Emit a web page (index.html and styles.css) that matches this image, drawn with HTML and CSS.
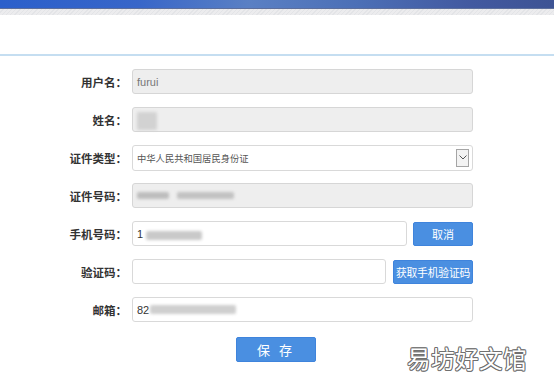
FILE: index.html
```html
<!DOCTYPE html>
<html lang="zh-CN">
<head>
<meta charset="utf-8">
<title>个人信息</title>
<link rel="stylesheet" href="styles.css">
</head>
<body>
<div class="header">
  <div class="bluebar"></div>
  <div class="hatch"></div>
</div>
<div class="titlebar"></div>
<form class="form">
  <div class="row">
    <label class="lbl">用户名：</label>
    <div class="field disabled"><span class="val">furui</span></div>
  </div>
  <div class="row">
    <label class="lbl">姓名：</label>
    <div class="field disabled"><span class="blur blur-name"></span></div>
  </div>
  <div class="row">
    <label class="lbl">证件类型：</label>
    <div class="field select"><span class="val small">中华人民共和国居民身份证</span><span class="arrow"><svg width="8" height="5" viewBox="0 0 8 5"><path d="M0.5 0.5 L4 4 L7.5 0.5" fill="none" stroke="#555" stroke-width="1"/></svg></span></div>
  </div>
  <div class="row">
    <label class="lbl">证件号码：</label>
    <div class="field disabled"><span class="blur blur-id1"></span><span class="blur blur-id2"></span></div>
  </div>
  <div class="row">
    <label class="lbl">手机号码：</label>
    <div class="field short"><span class="val dark">1</span><span class="blur blur-phone"></span></div>
    <button type="button" class="btn btn-cancel">取消</button>
  </div>
  <div class="row">
    <label class="lbl">验证码：</label>
    <div class="field shorter"></div>
    <button type="button" class="btn btn-code">获取手机验证码</button>
  </div>
  <div class="row">
    <label class="lbl">邮箱：</label>
    <div class="field"><span class="val dark">82</span><span class="blur blur-mail"></span></div>
  </div>
  <div class="actions">
    <button type="button" class="btn btn-save">保 存</button>
  </div>
</form>
<div class="watermark">易坊好文馆</div>
</body>
</html>
```
FILE: styles.css
```css
html, body {
  margin: 0;
  padding: 0;
  background: #fff;
  font-family: "Noto Sans CJK SC", "Noto Sans", sans-serif;
}
body {
  position: relative;
  width: 554px;
  height: 389px;
  overflow: hidden;
}
.bluebar {
  height: 8px;
  background: linear-gradient(90deg, #2b5fcb 0%, #3866c9 25%, #5a80c4 45%, #4c6fb6 65%, #4259a0 85%, #3d5394 100%);
  border-bottom: 1px solid #5d6f9c;
}
.hatch {
  height: 6px;
  background: repeating-linear-gradient(135deg, #ececee 0 2px, #e3e4e7 2px 3px);
}
.titlebar {
  height: 39px;
  border-bottom: 2px solid #c5def1;
}
.form {
  padding-top: 13px;
  margin: 0;
}
.row {
  display: flex;
  align-items: center;
  height: 25px;
  margin-bottom: 13px;
}
.lbl {
  width: 127px;
  margin-right: 5px;
  text-align: right;
  font-weight: bold;
  font-size: 11.5px;
  color: #333;
  font-family: "Noto Sans CJK TC", "Noto Sans CJK SC", sans-serif;
}
.field {
  position: relative;
  box-sizing: border-box;
  width: 341px;
  height: 25px;
  border: 1px solid #d9d9d9;
  border-radius: 3px;
  background: #fff;
  display: flex;
  align-items: center;
  padding-left: 4px;
}
.field.disabled {
  background: #eeeeee;
  border-color: #d6d6d6;
}
.field.short { width: 275px; }
.field.shorter { width: 254px; }
.val {
  font-family: "Liberation Sans", "Noto Sans CJK SC", sans-serif;
  font-size: 11px;
  color: #777;
}
.val.dark { color: #333; }
.val.small {
  font-family: "Noto Sans CJK SC", sans-serif;
  font-size: 9.3px;
  color: #555;
}
.select {
  justify-content: space-between;
  padding-right: 3px;
  height: 26px;
}
.arrow {
  box-sizing: border-box;
  width: 13px;
  height: 18px;
  border: 1px solid #a5a5a5;
  background: #f3f3f3;
  display: flex;
  align-items: center;
  justify-content: center;
}
.blur {
  display: inline-block;
  background: #c4c4c4;
  filter: blur(1.5px);
  border-radius: 2px;
}
.blur-name {
  width: 20px;
  height: 18px;
  background: #d2d2d2;
  margin-top: 2px;
}
.blur-id1 {
  width: 32px;
  height: 7px;
  background: #bdbdbd;
}
.blur-id2 {
  width: 57px;
  height: 7px;
  background: #c2c2c2;
  margin-left: 8px;
}
.blur-phone {
  width: 56px;
  height: 9px;
  margin-left: 3px;
  margin-top: 3px;
  background: #c9c9c9;
}
.blur-mail {
  width: 86px;
  height: 9px;
  margin-left: 1px;
  background: #cfcfcf;
}
.btn {
  box-sizing: border-box;
  border: 1px solid #3f84dc;
  border-radius: 2px;
  background: #4a8fe1;
  color: #fff;
  font-family: "Noto Sans CJK SC", sans-serif;
  font-size: 11px;
  padding: 0;
  height: 24px;
  cursor: pointer;
}
.btn-cancel {
  width: 60px;
  margin-left: 6px;
}
.btn-code {
  width: 80px;
  margin-left: 7px;
  font-size: 10.8px;
  letter-spacing: -0.2px;
}
.actions {
  padding-top: 1px;
  padding-left: 236px;
}
.btn-save {
  width: 80px;
  height: 25px;
  font-size: 13px;
  letter-spacing: 3px;
}
.watermark {
  position: absolute;
  left: 407px;
  top: 341px;
  font-family: "Noto Sans CJK SC", sans-serif;
  font-size: 23.5px;
  color: #fff;
  letter-spacing: 0.5px;
  text-shadow:
    1px 0 0 #707070, -1px 0 0 #707070, 0 1px 0 #707070, 0 -1px 0 #707070,
    0.7px 0.7px 0 #707070, -0.7px 0.7px 0 #707070, 0.7px -0.7px 0 #707070, -0.7px -0.7px 0 #707070;
}
```
